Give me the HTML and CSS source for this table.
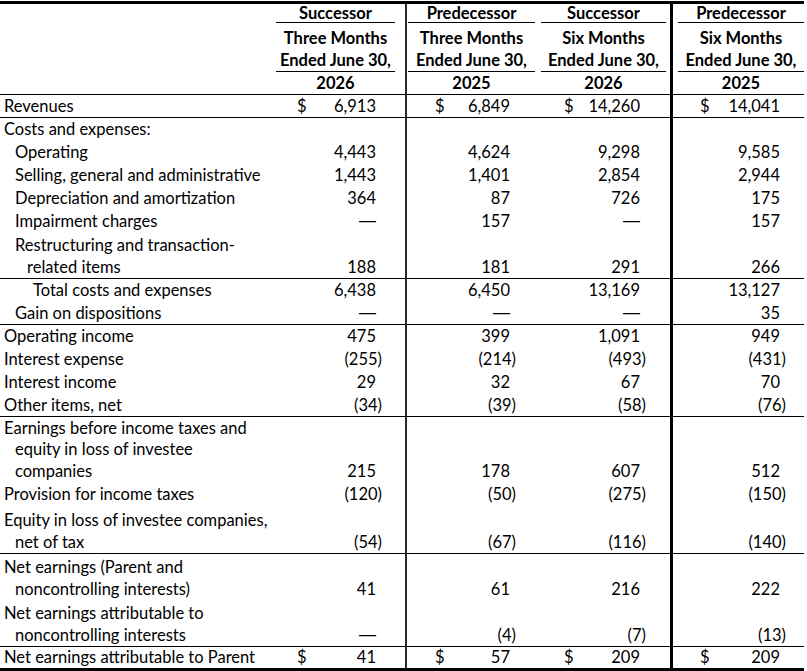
FILE: index.html
```html
<!DOCTYPE html>
<html>
<head>
<meta charset="utf-8">
<link rel="stylesheet" href="styles.css">
</head>
<body>
<table class="fin">
  <colgroup>
    <col class="c-lbl"><col class="c-1"><col class="c-2"><col class="c-3"><col class="c-4">
  </colgroup>
  <thead>
    <tr class="h1">
      <th></th>
      <th class="v1"><div class="hd">Successor</div></th>
      <th class="v2"><div class="hd">Predecessor</div></th>
      <th class="v3"><div class="hd">Successor</div></th>
      <th class="v4"><div class="hd">Predecessor</div></th>
    </tr>
    <tr class="h2">
      <th></th>
      <th class="v1"><div class="hd">Three Months<br>Ended June 30,</div></th>
      <th class="v2"><div class="hd">Three Months<br>Ended June 30,</div></th>
      <th class="v3"><div class="hd">Six Months<br>Ended June 30,</div></th>
      <th class="v4"><div class="hd">Six Months<br>Ended June 30,</div></th>
    </tr>
    <tr class="h3">
      <th></th>
      <th class="v1"><div class="hd nb">2026</div></th>
      <th class="v2"><div class="hd nb">2025</div></th>
      <th class="v3"><div class="hd nb">2026</div></th>
      <th class="v4"><div class="hd nb">2025</div></th>
    </tr>
  </thead>
  <tbody>
    <tr class="r23 top">
      <td class="lbl">Revenues</td>
      <td class="v1"><span class="dol">$</span>6,913</td>
      <td class="v2"><span class="dol">$</span>6,849</td>
      <td class="v3"><span class="dol">$</span>14,260</td>
      <td class="v4"><span class="dol">$</span>14,041</td>
    </tr>
    <tr class="r23 top">
      <td class="lbl">Costs and expenses:</td>
      <td class="v1"></td><td class="v2"></td><td class="v3"></td><td class="v4"></td>
    </tr>
    <tr class="r23">
      <td class="lbl i1">Operating</td>
      <td class="v1">4,443</td><td class="v2">4,624</td><td class="v3">9,298</td><td class="v4">9,585</td>
    </tr>
    <tr class="r23">
      <td class="lbl i1">Selling, general and administrative</td>
      <td class="v1">1,443</td><td class="v2">1,401</td><td class="v3">2,854</td><td class="v4">2,944</td>
    </tr>
    <tr class="r23">
      <td class="lbl i1">Depreciation and amortization</td>
      <td class="v1">364</td><td class="v2">87</td><td class="v3">726</td><td class="v4">175</td>
    </tr>
    <tr class="r23">
      <td class="lbl i1">Impairment charges</td>
      <td class="v1"><span class="dash">—</span></td><td class="v2">157</td><td class="v3"><span class="dash">—</span></td><td class="v4">157</td>
    </tr>
    <tr class="r46">
      <td class="lbl i1">Restructuring and transaction-<div class="cont2">related items</div></td>
      <td class="v1">188</td><td class="v2">181</td><td class="v3">291</td><td class="v4">266</td>
    </tr>
    <tr class="r22 top">
      <td class="lbl i3">Total costs and expenses</td>
      <td class="v1">6,438</td><td class="v2">6,450</td><td class="v3">13,169</td><td class="v4">13,127</td>
    </tr>
    <tr class="r23">
      <td class="lbl i1">Gain on dispositions</td>
      <td class="v1"><span class="dash">—</span></td><td class="v2"><span class="dash">—</span></td><td class="v3"><span class="dash">—</span></td><td class="v4">35</td>
    </tr>
    <tr class="r23 top">
      <td class="lbl">Operating income</td>
      <td class="v1">475</td><td class="v2">399</td><td class="v3">1,091</td><td class="v4">949</td>
    </tr>
    <tr class="r23">
      <td class="lbl">Interest expense</td>
      <td class="v1">(255<span class="rp">)</span></td><td class="v2">(214<span class="rp">)</span></td><td class="v3">(493<span class="rp">)</span></td><td class="v4">(431<span class="rp">)</span></td>
    </tr>
    <tr class="r23">
      <td class="lbl">Interest income</td>
      <td class="v1">29</td><td class="v2">32</td><td class="v3">67</td><td class="v4">70</td>
    </tr>
    <tr class="r23">
      <td class="lbl">Other items, net</td>
      <td class="v1">(34<span class="rp">)</span></td><td class="v2">(39<span class="rp">)</span></td><td class="v3">(58<span class="rp">)</span></td><td class="v4">(76<span class="rp">)</span></td>
    </tr>
    <tr class="r66 top">
      <td class="lbl">Earnings before income taxes and<div class="cont">equity in loss of investee</div><div class="cont">companies</div></td>
      <td class="v1">215</td><td class="v2">178</td><td class="v3">607</td><td class="v4">512</td>
    </tr>
    <tr class="r23">
      <td class="lbl">Provision for income taxes</td>
      <td class="v1">(120<span class="rp">)</span></td><td class="v2">(50<span class="rp">)</span></td><td class="v3">(275<span class="rp">)</span></td><td class="v4">(150<span class="rp">)</span></td>
    </tr>
    <tr class="r48">
      <td class="lbl">Equity in loss of investee companies,<div class="cont">net of tax</div></td>
      <td class="v1">(54<span class="rp">)</span></td><td class="v2">(67<span class="rp">)</span></td><td class="v3">(116<span class="rp">)</span></td><td class="v4">(140<span class="rp">)</span></td>
    </tr>
    <tr class="r47 top">
      <td class="lbl">Net earnings (Parent and<div class="cont">noncontrolling interests)</div></td>
      <td class="v1">41</td><td class="v2">61</td><td class="v3">216</td><td class="v4">222</td>
    </tr>
    <tr class="r46">
      <td class="lbl">Net earnings attributable to<div class="cont">noncontrolling interests</div></td>
      <td class="v1"><span class="dash">—</span></td><td class="v2">(4<span class="rp">)</span></td><td class="v3">(7<span class="rp">)</span></td><td class="v4">(13<span class="rp">)</span></td>
    </tr>
    <tr class="r21 top last">
      <td class="lbl">Net earnings attributable to Parent</td>
      <td class="v1"><span class="dol">$</span>41</td>
      <td class="v2"><span class="dol">$</span>57</td>
      <td class="v3"><span class="dol">$</span>209</td>
      <td class="v4"><span class="dol">$</span>209</td>
    </tr>
  </tbody>
</table>
</body>
</html>
```

FILE: styles.css
```css
html, body {
  margin: 0;
  padding: 0;
  background: #fff;
}
body {
  padding-top: 1px;
  font-family: Lato, "Open Sans", sans-serif;
  font-size: 16.5px;
  color: #000;
}
.fin {
  border-collapse: separate;
  border-spacing: 0;
  table-layout: fixed;
  width: 804px;
  border-top: 3px solid #000;
  border-bottom: 3px solid #000;
}
.c-lbl { width: 276px; }
.c-1 { width: 131px; }
.c-2 { width: 133px; }
.c-3 { width: 133px; }
.c-4 { width: 131px; }

th, td {
  padding: 0;
  vertical-align: bottom;
  line-height: 22px;
  white-space: nowrap;
}
th {
  font-weight: bold;
  text-align: center;
}
.hd {
  border-bottom: 1px solid #000;
  margin: 0 10px 0 0;
}
.v2 .hd { margin: 0 5px 0 1px; }
.v3 .hd { margin: 0 4px 0 1px; }
.v4 .hd { margin: 0 0 0 5px; }
.hd.nb { border-bottom: none; }

.h1 { height: 19px; }
.h1 .hd { line-height: 18px; }
.h2 { height: 49px; }
.h3 { height: 22px; }

.v1 { border-right: 2px solid #2a2a2a; }
.v3 { border-right: 3px solid #000; }

td.v1, td.v2, td.v3, td.v4 {
  text-align: right;
  padding-right: 30px;
  padding-bottom: 0;
}
td.v1 { padding-right: 29px; padding-left: 21px; }
td.v2 { padding-left: 28px; }
td.v3 { padding-left: 24px; }
td.v4 { padding-right: 24px; padding-left: 27px; }

.dol { float: left; }
.rp { margin-right: -6px; }
.dash {
  font-family: "Liberation Sans", sans-serif;
  font-size: 17px;
}

.lbl { padding-left: 4px; }
.lbl.i1 { padding-left: 15px; }
.lbl.i3 { padding-left: 33px; }
.cont { padding-left: 11px; }
.cont2 { padding-left: 12px; }

.top td { border-top: 1px solid #000; }

.r21 { height: 21px; }
.r22 { height: 22px; }
.r23 { height: 23px; }
.r46 { height: 46px; }
.r47 { height: 47px; }
.r48 { height: 48px; }
.r66 { height: 66px; }
.r66 .lbl { line-height: 21.5px; }
.last td { line-height: 21px; }
```
